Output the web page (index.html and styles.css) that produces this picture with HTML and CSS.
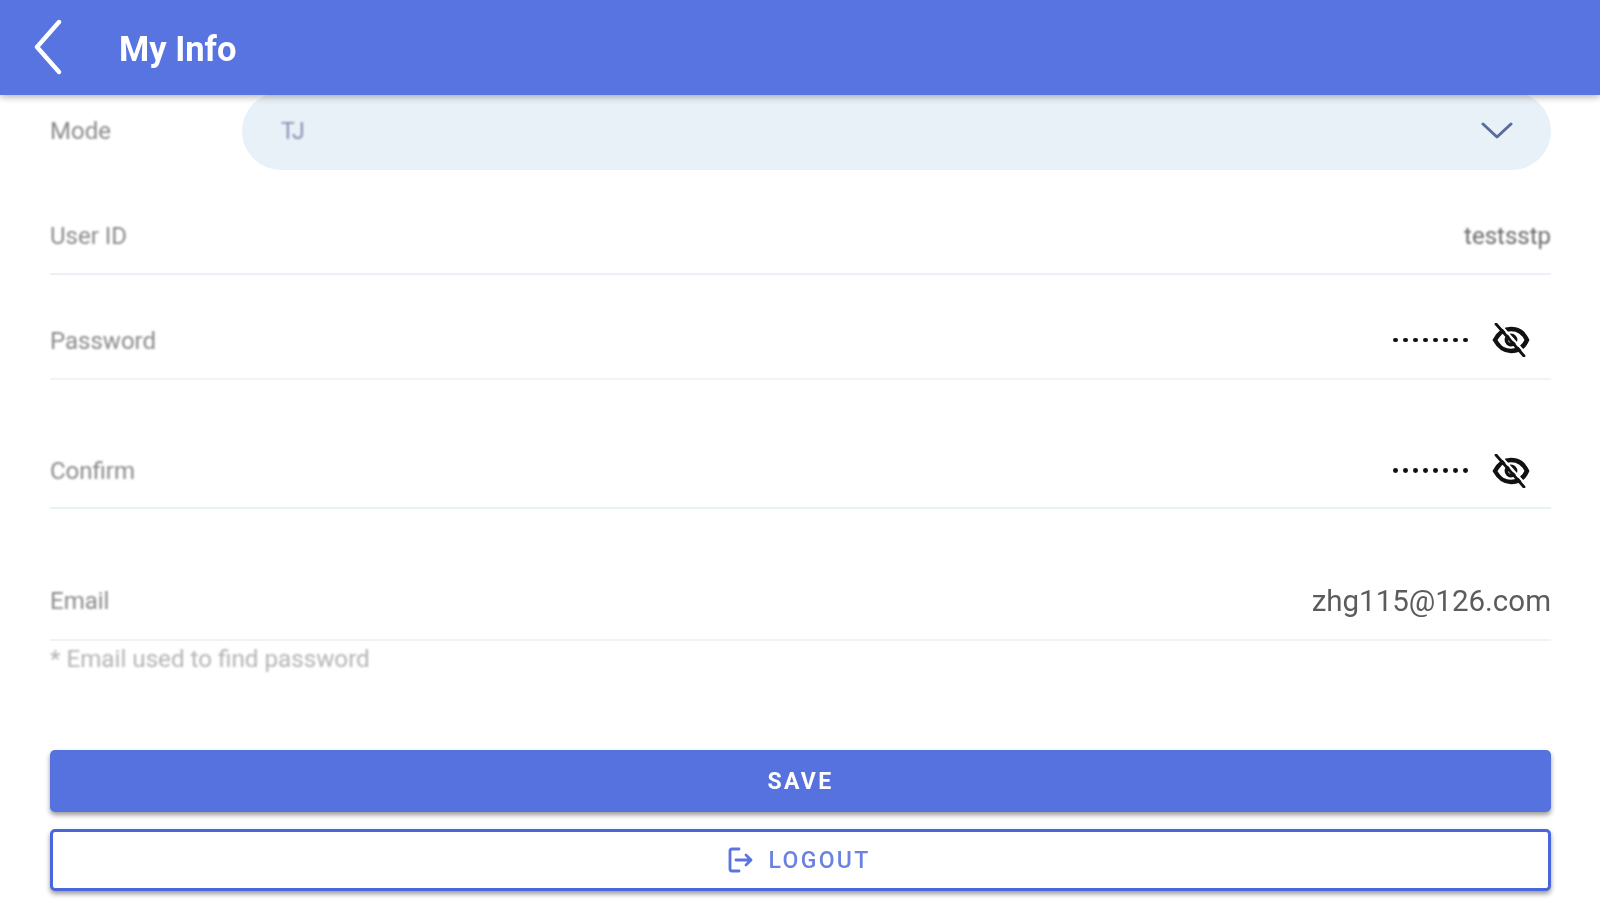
FILE: index.html
```html
<!DOCTYPE html>
<html lang="en">
<head>
<meta charset="utf-8">
<title>My Info</title>
<link rel="stylesheet" href="styles.css">
</head>
<body>
<header class="appbar">
  <svg class="back" width="32" height="60" viewBox="0 0 32 60" fill="none" stroke="#fff" stroke-width="4.4" stroke-linecap="round" stroke-linejoin="round"><path d="M27 4 L5 29 L27 54"/></svg>
  <h1 class="title">My Info</h1>
</header>
<main class="form">
  <div class="mode-row">
    <span class="label">Mode</span>
    <div class="select">
      <span class="select-value">TJ</span>
      <svg class="chevron" width="32" height="18" viewBox="0 0 32 18" fill="none" stroke="#5a6c9c" stroke-width="3" stroke-linecap="round" stroke-linejoin="round"><path d="M2 2 L16 15 L30 2"/></svg>
    </div>
  </div>
  <div class="row row-user">
    <span class="label">User ID</span>
    <span class="value-sm">testsstp</span>
  </div>
  <div class="row row-pass">
    <span class="label">Password</span>
    <div class="secret">
      <span class="dots"><i></i><i></i><i></i><i></i><i></i><i></i><i></i><i></i></span>
      <svg class="eye" width="38" height="34" viewBox="0 0 38 34" fill="none" stroke="#111" stroke-width="4.4" stroke-linecap="round"><path d="M3 17 C8 8 13 6 19 6 C25 6 31 8 35 17 C31 26 25 28 19 28 C13 28 8 26 3 17 Z"/><circle cx="19" cy="17" r="4.6" stroke-width="3.6"/><path d="M7 0 L35 32" stroke="#fff" stroke-width="2"/><path d="M4 1 L32 33" stroke-width="2.8"/></svg>
    </div>
  </div>
  <div class="row row-confirm">
    <span class="label">Confirm</span>
    <div class="secret">
      <span class="dots"><i></i><i></i><i></i><i></i><i></i><i></i><i></i><i></i></span>
      <svg class="eye" width="38" height="34" viewBox="0 0 38 34" fill="none" stroke="#111" stroke-width="4.4" stroke-linecap="round"><path d="M3 17 C8 8 13 6 19 6 C25 6 31 8 35 17 C31 26 25 28 19 28 C13 28 8 26 3 17 Z"/><circle cx="19" cy="17" r="4.6" stroke-width="3.6"/><path d="M7 0 L35 32" stroke="#fff" stroke-width="2"/><path d="M4 1 L32 33" stroke-width="2.8"/></svg>
    </div>
  </div>
  <div class="row row-email">
    <span class="label">Email</span>
    <span class="value-lg">zhg115@126.com</span>
  </div>
  <p class="hint">* Email used to find password</p>
  <button class="btn btn-save" type="button"><span>SAVE</span></button>
  <button class="btn btn-logout" type="button">
    <svg width="26" height="26" viewBox="0 0 26 26" fill="none" stroke="#5a74e0" stroke-width="2.8" stroke-linecap="round" stroke-linejoin="round"><path d="M11 2 H4 Q2 2 2 4 V22 Q2 24 4 24 H11"/><path d="M8 13 H23 M18 8 L23 13 L18 18"/></svg>
    <span>LOGOUT</span>
  </button>
</main>
</body>
</html>
```
FILE: styles.css
```css
* { box-sizing: border-box; }
html, body { margin: 0; height: 900px; overflow: hidden; background: #fff; }
body { font-family: Roboto, "Liberation Sans", sans-serif; }

.appbar {
  position: relative;
  z-index: 2;
  height: 95px;
  background: #5874e0;
  box-shadow: 0 2px 7px rgba(0, 0, 0, .3);
  display: flex;
  align-items: center;
  padding-left: 32px;
  gap: 55px;
}
.back { filter: blur(.7px); }
.title { margin: 3px 0 0; color: #fff; font-size: 34.5px; font-weight: 700; filter: blur(.7px); }

.form {
  margin-top: -3px;
  padding: 0 49px 0 50px;
  display: flex;
  flex-direction: column;
}
.mode-row { display: flex; align-items: center; height: 78px; }
.mode-row .label { width: 192px; }
.label { font-size: 24px; color: #8a8a8a; filter: blur(.8px); }
.select {
  flex: 1;
  height: 78px;
  border-radius: 39px;
  background: #e9f1f8;
  display: flex;
  align-items: center;
  justify-content: space-between;
  padding: 0 38px 0 39px;
}
.select-value { font-size: 23px; color: #8890b0; filter: blur(.8px); }
.chevron { filter: blur(.7px); }

.row {
  display: flex;
  align-items: center;
  justify-content: space-between;
  height: 75px;
  border-bottom: 2px solid #ecf1f8;
}
.row-user { margin-top: 30px; padding-bottom: 2px; }
.row-pass { margin-top: 30px; padding-bottom: 2px; border-bottom-color: #eef4f7; }
.row-confirm { margin-top: 54px; border-bottom-color: #e9f3f6; }
.row-email { margin-top: 57px; padding-bottom: 3px; border-bottom-color: #f0f3f6; }

.value-sm { font-size: 24px; color: #6a6a6a; filter: blur(.8px); }
.value-lg { font-size: 29.5px; color: #5c5c5c; filter: blur(.7px); }
.secret { display: flex; align-items: center; gap: 24px; margin-right: 21px; }
.row-pass .secret { margin-bottom: 1px; }
.dots { display: flex; gap: 5.2px; filter: blur(.6px); }
.dots i { width: 4.8px; height: 4.8px; border-radius: 50%; background: #111; }
.eye { filter: blur(.7px); }

.hint { margin: 4px 0 0; font-size: 24.2px; color: #b4b4b4; filter: blur(.8px); }

.btn {
  display: flex;
  align-items: center;
  justify-content: center;
  width: 100%;
  font-family: inherit;
  font-size: 23px;
  font-weight: 500;
  letter-spacing: 2.3px;
  border-radius: 5px;
  box-shadow: 0 3px 5px rgba(0, 0, 0, .4);
}
.btn-save {
  margin-top: 77px;
  height: 62px;
  border: 0;
  background: #5672df;
  color: #fff;
  font-weight: 700;
}
.btn-logout {
  margin-top: 17px;
  height: 62px;
  gap: 15px;
  padding-right: 9px;
  border: 3px solid #4a66dc;
  background: #fff;
  color: #6b82e2;
}
.btn span, .btn svg { filter: blur(.7px); }
```
